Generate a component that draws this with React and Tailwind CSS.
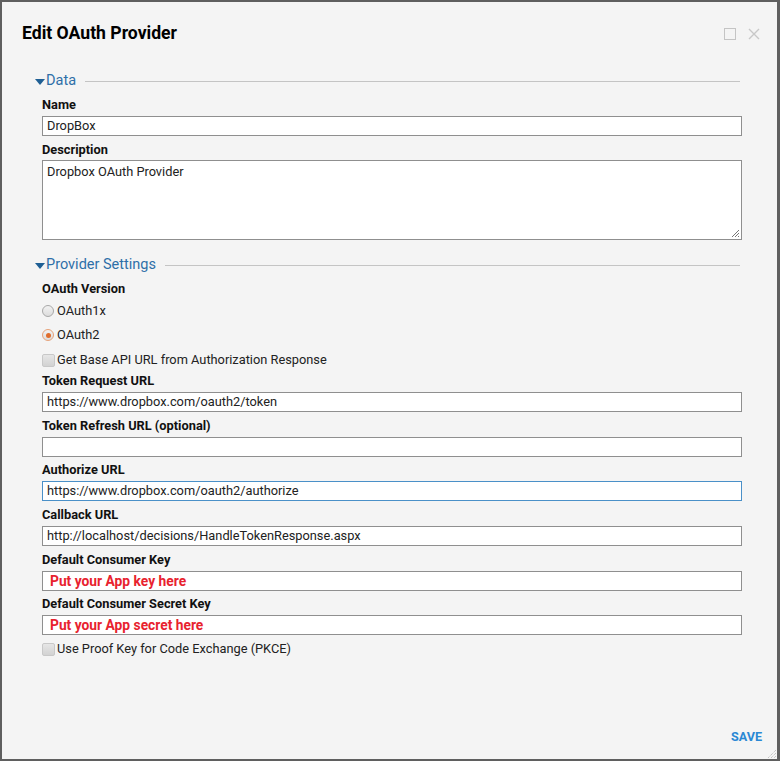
import React from "react";

const font = { fontFamily: "Roboto, 'Liberation Sans', sans-serif" };

const SectionHeader = ({ title, className = "" }) => (
  <div className={`flex items-center h-[18px] -ml-[7px] ${className}`}>
    <svg width="10" height="6" viewBox="0 0 10 6" className="mr-[1px] mt-[1px]">
      <path d="M0 0 L10 0 L5 6 Z" fill="#1f5f94" />
    </svg>
    <span className="text-[14.5px] leading-[18px] text-[#2e6fa8]">{title}</span>
    <div className="flex-1 h-px bg-[#c4c4c4] ml-[9px]" />
  </div>
);

const Label = ({ children, className = "" }) => (
  <div className={`text-[12.8px] leading-[16px] font-bold text-[#111] ${className}`}>{children}</div>
);

const Field = ({ value, red, focused }) => (
  <div
    className={`h-[20px] w-[700px] bg-white border flex items-center px-[4px] mt-[3px] ${
      focused ? "border-[#4a90c8]" : "border-[#8f8f8f]"
    }`}
  >
    <span
      className={
        red
          ? "text-[13.8px] font-bold text-[#e8222e] pl-[3px]"
          : "text-[12.8px] text-[#222]"
      }
    >
      {value}
    </span>
  </div>
);

const Checkbox = ({ label, className = "" }) => (
  <div className={`flex items-center h-[16px] ${className}`}>
    <div className="w-[13px] h-[13px] rounded-[2px] border border-[#c8c8c8] bg-gradient-to-b from-[#e6e6e6] to-[#d2d2d2] mr-[2px]" />
    <span className="text-[12.8px] text-[#222]">{label}</span>
  </div>
);

const Radio = ({ label, checked, className = "" }) => (
  <div className={`flex items-center h-[16px] ${className}`}>
    <div
      className={`w-[12px] h-[12px] rounded-full border flex items-center justify-center mr-[3px] bg-gradient-to-b from-[#f2f2f2] to-[#dcdcdc] ${
        checked ? "border-[#e6a27a]" : "border-[#a8a8a8]"
      }`}
    >
      {checked && <div className="w-[5px] h-[5px] rounded-full bg-[#e06d2c]" />}
    </div>
    <span className="text-[12.8px] text-[#222]">{label}</span>
  </div>
);

export default function App() {
  return (
    <div className="w-[780px] h-[761px] bg-[#5f5f5f] pt-[2px] pl-[2px] pr-[3px] pb-[2px]" style={font}>
      <div className="relative w-full h-full bg-[#f4f4f4] flex flex-col">
        <div className="flex items-center justify-between pl-[20px] pr-[17px] pt-[19px] h-[43px]">
          <h1 className="text-[17.6px] leading-[24px] font-bold text-black">Edit OAuth Provider</h1>
          <div className="flex items-center gap-[12px] mt-[2px]">
            <div className="w-[12px] h-[12px] border-[1.5px] border-[#c4c4c4]" />
            <svg width="12" height="12" viewBox="0 0 12 12">
              <path d="M1 1 L11 11 M11 1 L1 11" stroke="#c8c8c8" strokeWidth="1.4" />
            </svg>
          </div>
        </div>

        <div className="pl-[40px] pt-[27px]">
          <SectionHeader title="Data" className="w-[705px]" />
          <Label className="mt-[7px]">Name</Label>
          <Field value="DropBox" />
          <Label className="mt-[6px]">Description</Label>
          <div className="relative w-[700px] h-[80px] mt-[2px] bg-white border border-[#8f8f8f] px-[4px] pt-[3px]">
            <div className="text-[12.8px] leading-[16px] text-[#222]">Dropbox OAuth Provider</div>
            <svg width="9" height="9" viewBox="0 0 9 9" className="absolute right-[1px] bottom-[1px]">
              <path d="M8 1 L1 8 M8 4 L4 8 M8 7 L7 8" stroke="#777" strokeWidth="1" />
            </svg>
          </div>

          <SectionHeader title="Provider Settings" className="w-[705px] mt-[16px]" />
          <Label className="mt-[7px]">OAuth Version</Label>
          <Radio label="OAuth1x" className="mt-[6px]" />
          <Radio label="OAuth2" checked className="mt-[8px]" />
          <Checkbox label="Get Base API URL from Authorization Response" className="mt-[9px]" />
          <Label className="mt-[5px]">Token Request URL</Label>
          <Field value="https://www.dropbox.com/oauth2/token" />
          <Label className="mt-[6px]">Token Refresh URL (optional)</Label>
          <Field value="" />
          <Label className="mt-[5px]">Authorize URL</Label>
          <Field value="https://www.dropbox.com/oauth2/authorize" focused />
          <Label className="mt-[6px]">Callback URL</Label>
          <Field value="http://localhost/decisions/HandleTokenResponse.aspx" />
          <Label className="mt-[6px]">Default Consumer Key</Label>
          <Field value="Put your App key here" red />
          <Label className="mt-[5px]">Default Consumer Secret Key</Label>
          <Field value="Put your App secret here" red />
          <Checkbox label="Use Proof Key for Code Exchange (PKCE)" className="mt-[6px]" />
        </div>

        <div className="flex-1" />
        <div className="flex justify-end pr-[15px] pb-[12px]">
          <span className="text-[12.6px] font-bold text-[#2a88d4]">SAVE</span>
        </div>
        <svg width="10" height="10" viewBox="0 0 10 10" className="absolute right-0 bottom-0">
          <path d="M9 1 L1 9 M9 4 L4 9 M9 7 L7 9" stroke="#b0b0b0" strokeWidth="1" strokeDasharray="1 1" />
        </svg>
      </div>
    </div>
  );
}
